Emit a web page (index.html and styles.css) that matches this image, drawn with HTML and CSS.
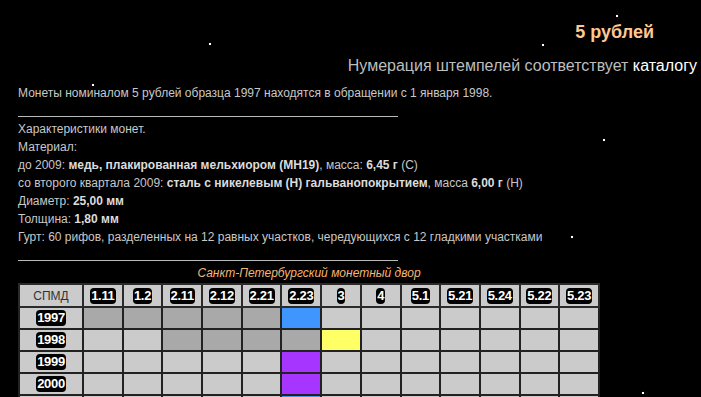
FILE: index.html
```html
<!DOCTYPE html>
<html lang="ru">
<head>
<meta charset="utf-8">
<title>5 рублей</title>
<link rel="stylesheet" href="styles.css">
</head>
<body>
<div class="page">
  <header class="head">
    <h1 class="title">5 рублей</h1>
    <p class="subtitle">Нумерация штемпелей соответствует <a class="cat" href="#">каталогу</a></p>
  </header>
  <section class="info">
    <p class="intro">Монеты номиналом 5 рублей образца 1997 находятся в обращении с 1 января 1998.</p>
    <hr class="rule">
    <ul class="specs">
      <li>Характеристики монет.</li>
      <li>Материал:</li>
      <li>до 2009: <b>медь, плакированная мельхиором (МН19)</b>, масса: <b>6,45 г</b> (С)</li>
      <li>со второго квартала 2009: <b>сталь с никелевым (Н) гальванопокрытием</b>, масса <b>6,00 г</b> (Н)</li>
      <li>Диаметр: <b>25,00 мм</b></li>
      <li>Толщина: <b>1,80 мм</b></li>
      <li>Гурт: 60 рифов, разделенных на 12 равных участков, чередующихся с 12 гладкими участками</li>
    </ul>
    <hr class="rule rule2">
  </section>
  <table class="dies">
    <caption>Санкт-Петербургский монетный двор</caption>
    <colgroup><col class="c0"></colgroup>
    <thead>
      <tr>
        <th class="mint">СПМД</th>
        <th><span class="bd">1.11</span></th>
        <th><span class="bd">1.2</span></th>
        <th><span class="bd">2.11</span></th>
        <th><span class="bd">2.12</span></th>
        <th><span class="bd">2.21</span></th>
        <th><span class="bd">2.23</span></th>
        <th><span class="bd">3</span></th>
        <th><span class="bd">4</span></th>
        <th><span class="bd">5.1</span></th>
        <th><span class="bd">5.21</span></th>
        <th><span class="bd">5.24</span></th>
        <th><span class="bd">5.22</span></th>
        <th><span class="bd">5.23</span></th>
      </tr>
    </thead>
    <tbody>
      <tr>
        <th><span class="bd">1997</span></th>
        <td class="d"></td><td class="d"></td><td class="d"></td><td class="d"></td><td class="d"></td><td class="b"></td>
        <td></td><td></td><td></td><td></td><td></td><td></td><td></td>
      </tr>
      <tr>
        <th><span class="bd">1998</span></th>
        <td></td><td></td><td class="d"></td><td class="d"></td><td class="d"></td><td class="d"></td>
        <td class="y"></td><td></td><td></td><td></td><td></td><td></td><td></td>
      </tr>
      <tr>
        <th><span class="bd">1999</span></th>
        <td></td><td></td><td></td><td></td><td></td><td class="p"></td>
        <td></td><td></td><td></td><td></td><td></td><td></td><td></td>
      </tr>
      <tr>
        <th><span class="bd">2000</span></th>
        <td></td><td></td><td></td><td></td><td></td><td class="p"></td>
        <td></td><td></td><td></td><td></td><td></td><td></td><td></td>
      </tr>
      <tr>
        <th><span class="bd">2001</span></th>
        <td></td><td></td><td></td><td></td><td></td><td class="b"></td>
        <td></td><td></td><td></td><td></td><td></td><td></td><td></td>
      </tr>
    </tbody>
  </table>
</div>
</body>
</html>
```
FILE: styles.css
```css
html, body {
  margin: 0;
  padding: 0;
}
body {
  background-color: #000;
  background-image:
    radial-gradient(circle at 617px 16px, #fff 1px, transparent 1.6px),
    radial-gradient(circle at 543px 45px, #fff 1px, transparent 1.6px),
    radial-gradient(circle at 210px 44px, #fff 1px, transparent 1.6px),
    radial-gradient(circle at 93px 85px, #fff 1px, transparent 1.6px),
    radial-gradient(circle at 604px 140px, #fff 1px, transparent 1.6px),
    radial-gradient(circle at 572px 237px, #fff 1px, transparent 1.6px),
    radial-gradient(circle at 152px 340px, #fff 1px, transparent 1.6px),
    radial-gradient(circle at 643px 393px, #fff 1px, transparent 1.6px);
  background-repeat: no-repeat;
  color: #c8c8c8;
  font-family: "Liberation Sans", Arial, sans-serif;
  font-size: 12px;
  overflow: hidden;
}
.page {
  width: 701px;
}
.head {
  padding-top: 20px;
}
.title {
  margin: 0;
  text-align: right;
  padding-right: 47px;
  font-size: 18px;
  line-height: 24px;
  font-weight: bold;
  color: #ffc891;
}
.subtitle {
  margin: 12px 0 0;
  text-align: right;
  padding-right: 4px;
  font-size: 16px;
  line-height: 20px;
  color: #bdbdbd;
}
.cat {
  color: #fff;
  text-decoration: none;
}
.info {
  padding-left: 18px;
}
.intro {
  margin: 8px 0 0;
  line-height: 18px;
}
.rule {
  width: 380px;
  margin: 14px 0 0;
  border: 0;
  border-top: 1px solid #bbb;
  height: 0;
}
.rule2 {
  margin-top: 14px;
}
.specs {
  list-style: none;
  margin: 3px 0 0;
  padding: 0;
  line-height: 18px;
}
.specs b {
  color: #dcdcdc;
}
.dies {
  margin: 0 0 0 18px;
  width: 582px;
  table-layout: fixed;
  border-collapse: collapse;
  border: 2px solid #333;
}
.dies caption {
  caption-side: top;
  font-style: italic;
  color: #f5b676;
  font-size: 12px;
  line-height: 16px;
  padding: 4px 0 2px;
  text-align: center;
}
.c0 {
  width: 64px;
}
.dies th,
.dies td {
  border: 2px solid #222;
  background: #cbcbcb;
  padding: 0;
  height: 20px;
  text-align: center;
  vertical-align: middle;
}
.dies thead th {
  height: 21px;
  border-color: #2a2a2a;
}
.dies th.mint {
  font-weight: normal;
  color: #333;
  font-size: 12px;
}
.bd {
  display: inline-block;
  background: #000;
  color: #fff;
  font-weight: bold;
  font-size: 13px;
  line-height: 16px;
  letter-spacing: -0.3px;
  padding: 0 1px;
  border-radius: 4px;
}
.dies td.d { background: #a9a9a9; }
.dies td.b { background: #3f96ff; }
.dies td.y { background: #ffff66; }
.dies td.p { background: #a535ff; }
```
